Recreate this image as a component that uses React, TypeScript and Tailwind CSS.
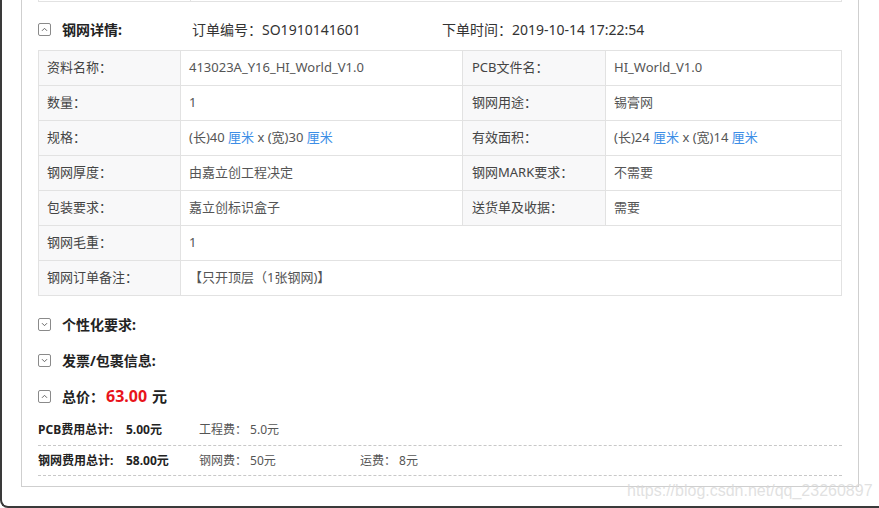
import React from "react";

const FONT = '"Noto Sans", "Noto Sans CJK SC", sans-serif';

function Toggle({ up }: { up: boolean }) {
  return (
    <span className="flex h-[13px] w-[13px] shrink-0 items-center justify-center rounded-[2px] border border-[#8a8a8a] bg-white">
      <svg width="7" height="5" viewBox="0 0 7 5" fill="none">
        {up ? (
          <path d="M1 3.8 L3.5 1.3 L6 3.8" stroke="#666" strokeWidth="1" />
        ) : (
          <path d="M1 1.2 L3.5 3.7 L6 1.2" stroke="#666" strokeWidth="1" />
        )}
      </svg>
    </span>
  );
}

function Blue({ children }: { children: React.ReactNode }) {
  return <span className="text-[#3d8ee6]">{children}</span>;
}

const L = "h-[35px] flex items-center pl-[8px] border-r border-b border-[#e2e2e2] bg-[#f8f8f9] text-[#444]";
const V = "h-[35px] flex items-center pl-[8px] border-r border-b border-[#e2e2e2] bg-white text-[#555]";

export default function App() {
  return (
    <div
      className="relative h-[508px] w-[879px] overflow-hidden rounded-bl-[8px] border-b-2 border-l-2 border-[#3a3a3a] bg-white pl-[19px]"
      style={{ fontFamily: FONT }}
    >
      <div className="w-[838px] border-b border-l border-r border-[#cfcfcf] bg-white px-[16px] pb-[10px]">
        {/* previous table fragment */}
        <div className="flex h-[2px] border-b border-l border-r border-[#e2e2e2]">
          <div className="w-[152px] border-r border-[#e2e2e2]" />
        </div>

        {/* header */}
        <div className="flex h-[48px] items-center pt-[6px] text-[14px] text-[#333]">
          <Toggle up />
          <span className="ml-[11px] w-[130px] font-bold text-[#222]">钢网详情:</span>
          <span className="w-[250px]">订单编号：SO1910141601</span>
          <span>下单时间：2019-10-14 17:22:54</span>
        </div>

        {/* table */}
        <div className="grid grid-cols-[142px_282px_143px_236px] border-l border-t border-[#e2e2e2] text-[13px]">
          <div className={L}>资料名称：</div>
          <div className={V}>413023A_Y16_HI_World_V1.0</div>
          <div className={L + " pl-[9px]"}>PCB文件名：</div>
          <div className={V}>HI_World_V1.0</div>

          <div className={L}>数量：</div>
          <div className={V}>1</div>
          <div className={L + " pl-[9px]"}>钢网用途：</div>
          <div className={V}>锡膏网</div>

          <div className={L}>规格：</div>
          <div className={V}>
            <span>
              (长)40 <Blue>厘米</Blue> x (宽)30 <Blue>厘米</Blue>
            </span>
          </div>
          <div className={L + " pl-[9px]"}>有效面积：</div>
          <div className={V}>
            <span>
              (长)24 <Blue>厘米</Blue> x (宽)14 <Blue>厘米</Blue>
            </span>
          </div>

          <div className={L}>钢网厚度：</div>
          <div className={V}>由嘉立创工程决定</div>
          <div className={L + " pl-[9px]"}>钢网MARK要求：</div>
          <div className={V}>不需要</div>

          <div className={L}>包装要求：</div>
          <div className={V}>嘉立创标识盒子</div>
          <div className={L + " pl-[9px]"}>送货单及收据：</div>
          <div className={V}>需要</div>

          <div className={L}>钢网毛重：</div>
          <div className={V + " col-span-3"}>1</div>

          <div className={L}>钢网订单备注：</div>
          <div className={V + " col-span-3"}>【只开顶层（1张钢网)】</div>
        </div>

        {/* collapsible sections */}
        <div className="mt-[10px] text-[14px] text-[#222]">
          <div className="flex h-[36px] items-center">
            <Toggle up={false} />
            <span className="ml-[11px] font-bold">个性化要求:</span>
          </div>
          <div className="flex h-[36px] items-center">
            <Toggle up={false} />
            <span className="ml-[11px] font-bold">发票/包裹信息:</span>
          </div>
          <div className="flex h-[36px] items-center">
            <Toggle up />
            <span className="ml-[11px] font-bold">总价：</span>
            <span className="ml-[2px] text-[16px] font-bold text-[#e8141b]">63.00</span>
            <span className="ml-[5px] text-[15px] font-bold">元</span>
          </div>
        </div>

        {/* fee rows */}
        <div className="text-[12px]">
          <div className="flex h-[32px] items-center border-b border-dashed border-[#c8c8c8] pt-[1px]">
            <span className="w-[88px] font-bold text-[#222]">PCB费用总计:</span>
            <span className="w-[73px] font-bold text-[#222]">5.00元</span>
            <span className="text-[#555]">工程费：&nbsp;5.0元</span>
          </div>
          <div className="flex h-[30px] items-center border-b border-dashed border-[#c8c8c8]">
            <span className="w-[88px] font-bold text-[#222]">钢网费用总计:</span>
            <span className="w-[73px] font-bold text-[#222]">58.00元</span>
            <span className="w-[161px] text-[#555]">钢网费：&nbsp;50元</span>
            <span className="text-[#555]">运费：&nbsp;8元</span>
          </div>
        </div>
      </div>

      {/* watermark */}
      <div
        className="absolute left-[625px] top-[479px] whitespace-nowrap text-[16px] text-[#d9d9d9]/80"
        style={{ fontFamily: '"Liberation Sans", Arial, sans-serif' }}
      >
        https://blog.csdn.net/qq_23260897
      </div>
    </div>
  );
}
